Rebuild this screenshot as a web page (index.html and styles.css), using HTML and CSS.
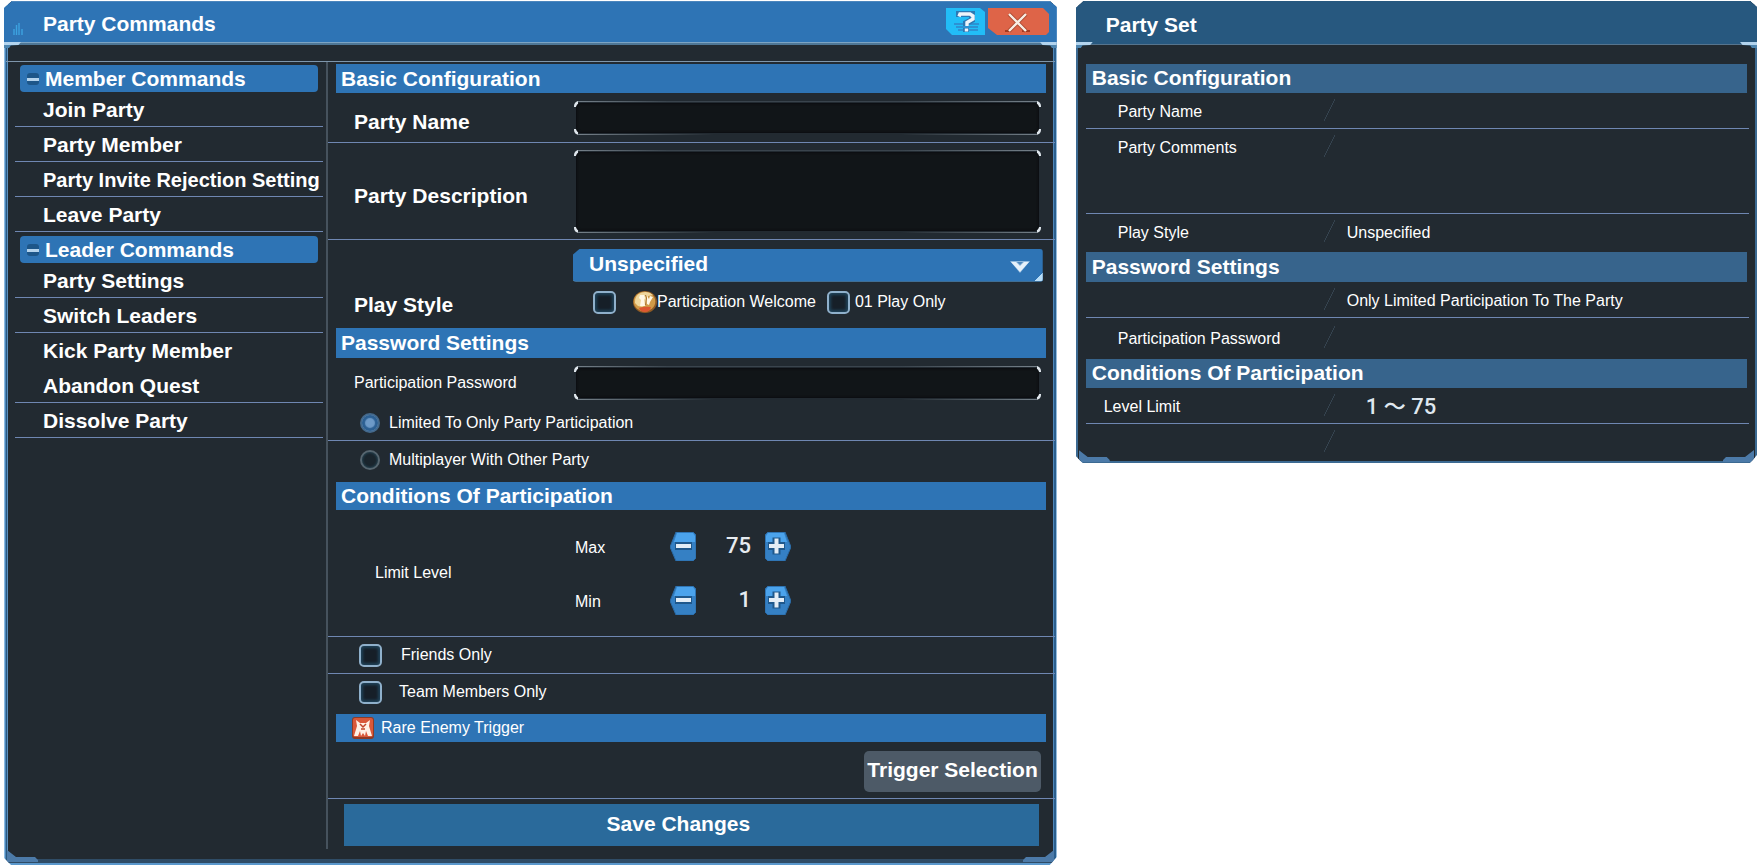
FILE: index.html
```html
<!DOCTYPE html>
<html lang="en">
<head>
<meta charset="utf-8">
<title>Party Commands</title>
<link rel="stylesheet" href="styles.css">
</head>
<body>
<main class="screen">
  <section class="window window-main">
    <header class="titlebar">
      <svg class="title-icon" viewBox="0 0 10 14" aria-hidden="true"><path d="M1 7v6M3.500 3v10M6 1v12M9 7v6" stroke="#3da3e0" stroke-width="1.400" fill="none"/></svg>
      <h1 class="title">Party Commands</h1>
      <button class="win-btn help" type="button" aria-label="Help">
        <svg viewBox="0 0 40 27" aria-hidden="true"><path d="M1 0h34l5 4v23H7l-6-6z" fill="#22bdf7"/><path d="M9 16h25M11 19h22M13 22h20" stroke="#2c92d4" stroke-width="2"/><path d="M14 9V6h13v6l-6 3v3M21 20v4" fill="none" stroke="#2b79b4" stroke-width="6"/><path d="M14 8.500L15 6h10l3 2v3l-6 3.500v3.500M21.500 20.500v3" fill="none" stroke="#eef4fa" stroke-width="3.400"/></svg>
      </button>
      <button class="win-btn close" type="button" aria-label="Close">
        <svg viewBox="0 0 62 27" aria-hidden="true"><path d="M1 0h55l6 6v18l-3 3H10l-9-7z" fill="#de6448"/><path d="M18 23h6M35 23h8" stroke="#a33a20" stroke-width="2"/><path d="M22 6l17 17M39 6L22 23" stroke="#a8472e" stroke-width="4"/><path d="M22 6l17 17M39 6L22 23" stroke="#f8ede4" stroke-width="2.400"/></svg>
      </button>
    </header>
    <i class="tick tick-l"></i><i class="tick tick-r"></i>
    <i class="foot foot-l"></i><i class="foot foot-r"></i>
    <div class="columns">
      <nav class="sidebar">
        <h2 class="group"><i class="collapse"></i>Member Commands</h2>
        <ul class="menu">
          <li><a href="#join">Join Party</a></li>
          <li><a href="#member">Party Member</a></li>
          <li><a class="long" href="#invite">Party Invite Rejection Setting</a></li>
          <li><a href="#leave">Leave Party</a></li>
        </ul>
        <h2 class="group"><i class="collapse"></i>Leader Commands</h2>
        <ul class="menu">
          <li><a href="#settings">Party Settings</a></li>
          <li><a href="#switch">Switch Leaders</a></li>
          <li class="plain"><a href="#kick">Kick Party Member</a></li>
          <li><a href="#abandon">Abandon Quest</a></li>
          <li><a href="#dissolve">Dissolve Party</a></li>
        </ul>
      </nav>
      <form class="settings">
        <h2 class="bar">Basic Configuration</h2>
        <div class="row row-name">
          <label class="big" for="pname">Party Name</label>
          <span class="field"><input id="pname" type="text"></span>
        </div>
        <div class="row row-desc">
          <label class="big" for="pdesc">Party Description</label>
          <span class="field"><textarea id="pdesc"></textarea></span>
        </div>
        <div class="row row-style">
          <label class="big" for="pstyle">Play Style</label>
          <div class="style-fields">
            <div class="select">
              <select id="pstyle"><option>Unspecified</option></select>
              <svg class="chevron" viewBox="0 0 20 12" aria-hidden="true"><path d="M0 0h20L10 12z" fill="#8fb9de"/><path d="M1 1h5l4 4 4-4h5L10 11z" fill="#e6f1fa"/><path d="M7 1h6l-3 3z" fill="#4f88bd"/></svg>
            </div>
            <div class="checks">
              <input class="box" id="welcome" type="checkbox">
              <label class="with-icon" for="welcome">
                <svg class="medal" viewBox="0 0 24 22" aria-hidden="true"><ellipse cx="12" cy="11" rx="12" ry="11" fill="#8f5a24"/><ellipse cx="11.500" cy="10.500" rx="10.800" ry="10" fill="#d09a48"/><path d="M2 12Q1 4 9 1.500 16 0 20 4l-5 1-2 9-4 2-4-1z" fill="#efd69c"/><path d="M7 4h4l1 3-1 2 1 6H7l1-6-2-2zM14 5l2 3 1-3 3 1-3 5-1 3-2-1z" fill="#fff8e6"/><path d="M12.500 4l1 3-1 7" stroke="#a8702c" fill="none"/><path d="M6 17q6-2 12-1-1 5-6 5t-6-4z" fill="#dc5730"/></svg>Participation Welcome</label>
              <input class="box" id="play01" type="checkbox">
              <label for="play01">01 Play Only</label>
            </div>
          </div>
        </div>
        <h2 class="bar bar-tall">Password Settings</h2>
        <div class="row row-pass">
          <label for="ppass">Participation Password</label>
          <span class="field"><input id="ppass" type="password"></span>
        </div>
        <div class="row row-radio ruled">
          <input class="dot" type="radio" name="mode" id="m1" checked><label for="m1">Limited To Only Party Participation</label>
        </div>
        <div class="row row-radio row-radio-last">
          <input class="dot" type="radio" name="mode" id="m2"><label for="m2">Multiplayer With Other Party</label>
        </div>
        <h2 class="bar bar-conditions">Conditions Of Participation</h2>
        <div class="row row-level">
          <span class="level-label">Limit Level</span>
          <div class="steppers">
            <div class="stepper">
              <span class="step-name">Max</span>
              <button type="button" aria-label="Lower maximum"><svg viewBox="0 0 26 29" aria-hidden="true"><path class="hex" d="M6 0h17l3 3v23l-3 3H6L0 15z"/><path class="shine" d="M7 1h16l2 3v6H4z"/><path d="M5 14h17" stroke="#1f588c" stroke-width="8"/><path d="M6 14h15" stroke="#e3edf6" stroke-width="4"/></svg></button>
              <output>75</output>
              <button type="button" aria-label="Raise maximum"><svg viewBox="0 0 26 29" aria-hidden="true"><path class="hex" d="M20 0H3L0 3v23l3 3h17l6-14z"/><path class="shine" d="M19 1H3L1 4v6h21z"/><path d="M3 14h17M11.500 5.500v17" stroke="#1f588c" stroke-width="8"/><path d="M4 14h15M11.500 6.500v15" stroke="#e3edf6" stroke-width="4"/></svg></button>
            </div>
            <div class="stepper">
              <span class="step-name">Min</span>
              <button type="button" aria-label="Lower minimum"><svg viewBox="0 0 26 29" aria-hidden="true"><path class="hex" d="M6 0h17l3 3v23l-3 3H6L0 15z"/><path class="shine" d="M7 1h16l2 3v6H4z"/><path d="M5 14h17" stroke="#1f588c" stroke-width="8"/><path d="M6 14h15" stroke="#e3edf6" stroke-width="4"/></svg></button>
              <output>1</output>
              <button type="button" aria-label="Raise minimum"><svg viewBox="0 0 26 29" aria-hidden="true"><path class="hex" d="M20 0H3L0 3v23l3 3h17l6-14z"/><path class="shine" d="M19 1H3L1 4v6h21z"/><path d="M3 14h17M11.500 5.500v17" stroke="#1f588c" stroke-width="8"/><path d="M4 14h15M11.500 6.500v15" stroke="#e3edf6" stroke-width="4"/></svg></button>
            </div>
          </div>
        </div>
        <div class="row row-check ruled">
          <input class="box" type="checkbox" id="friends"><label for="friends">Friends Only</label>
        </div>
        <div class="row row-check row-check-last">
          <input class="box" type="checkbox" id="team"><label for="team">Team Members Only</label>
        </div>
        <h2 class="bar bar-small">
          <svg class="rare" viewBox="0 0 22 22" aria-hidden="true"><rect width="22" height="22" rx="3" fill="#8f3a24"/><rect x="1" y="1" width="20" height="19" rx="2" fill="#d9583a"/><path d="M4 3l4 3h6l4-3-1 6 3 10h-4l-2-5-1 5-2-3-2 3-1-5-2 5H2L5 9z" fill="#fff1e6"/><path d="M8 7l3 3 3-3M9 12h4" stroke="#c2452a" stroke-width="1.500" fill="none"/></svg>Rare Enemy Trigger</h2>
        <div class="row row-trigger">
          <button class="trigger" type="button">Trigger Selection</button>
        </div>
        <button class="save" type="submit">Save Changes</button>
      </form>
    </div>
  </section>

  <section class="window window-info">
    <header class="titlebar">
      <h1 class="title">Party Set</h1>
    </header>
    <i class="tick tick-l"></i><i class="tick tick-r"></i>
    <i class="foot foot-l"></i><i class="foot foot-r"></i>
    <div class="info">
      <h2 class="bar">Basic Configuration</h2>
      <dl class="pair ruled"><dt>Party Name</dt><dd></dd></dl>
      <dl class="pair pair-tall ruled"><dt>Party Comments</dt><dd></dd></dl>
      <dl class="pair pair-style"><dt>Play Style</dt><dd>Unspecified</dd></dl>
      <h2 class="bar bar-tall">Password Settings</h2>
      <dl class="pair ruled"><dt></dt><dd>Only Limited Participation To The Party</dd></dl>
      <dl class="pair pair-last"><dt>Participation Password</dt><dd></dd></dl>
      <h2 class="bar">Conditions Of Participation</h2>
      <dl class="pair pair-level ruled"><dt>Level Limit</dt><dd class="range">1 ～ 75</dd></dl>
      <dl class="pair pair-end"><dt></dt><dd></dd></dl>
    </div>
  </section>
</main>
</body>
</html>
```
FILE: styles.css
```css
:root {
  --panel: #222a31;
  --blue: #2e74b5;
  --rule: #6f87b2;
  --bar: #2e74b5;
}
* { box-sizing: border-box; }
body {
  margin: 0;
  background: #fff;
  color: #fff;
  font: 16px/20px "Liberation Sans", Arial, sans-serif;
}
h1, h2, ul, dl, dd { margin: 0; padding: 0; }
h1, h2, .big { font-size: 21px; font-weight: bold; line-height: 24px; }
ul { list-style: none; }
a { color: inherit; text-decoration: none; }
button {
  border: 0;
  padding: 0;
  background: none;
  color: inherit;
  font: inherit;
}
svg { display: block; }
input, textarea, select { margin: 0; font: inherit; color: inherit; }

.screen {
  display: flex;
  align-items: flex-start;
  gap: 19px;
  padding: 1px 4px 0;
}

/* Window frame */
.window {
  position: relative;
  min-width: 0;
  padding: 0 4px 4px;
  background:
    linear-gradient(var(--panel), var(--panel)) 4px 0 / calc(100% - 8px) calc(100% - 4px) no-repeat,
    linear-gradient(#2f4c66, #2f4c66) 4px 100% / calc(100% - 8px) 4px no-repeat,
    linear-gradient(90deg, #8ab9e0 0 1px, #4b86ba 1px 2px, #2a587f 2px 3px, #5b8fbd 3px 50%, #4f86b8 50% calc(100% - 3px), #2b5f8e calc(100% - 3px) calc(100% - 1px), #6ba2d0 calc(100% - 1px));
  clip-path: polygon(8px 0, calc(100% - 7px) 0, 100% 6px, 100% calc(100% - 8px), calc(100% - 7px) 100%, 7px 100%, 0 calc(100% - 7px), 0 7px);
}
.window-main {
  flex: 1052 1 0;
  border-bottom: 2px solid #5b98cc;
  padding-bottom: 2px;
}
.window-info {
  --bar: #37648c;
  flex: 682 1 0;
  padding: 0 2px 2px;
  background:
    linear-gradient(var(--panel), var(--panel)) 2px 0 / calc(100% - 4px) calc(100% - 2px) no-repeat,
    #3c6a92;
}
.titlebar {
  display: flex;
  align-items: center;
  height: 44px;
  margin: 0 -4px;
  padding: 0 8px 0 9px;
  background: var(--blue);
  border-top: 1px solid #4c86bd;
  border-bottom: 2px solid #4f7796;
  box-shadow: inset 0 -1px #7da5c4;
}
.window-info .titlebar {
  margin: 0 -2px;
  padding: 3px 31px 0 30px;
  background: #27587f;
  border-top-color: #27587f;
  border-bottom: 1px solid #56748d;
  box-shadow: none;
}
.title-icon { width: 10px; height: 14px; margin: 12px 20px 0 0; }
.window-main .title { flex: 1; padding-top: 2px; }
.win-btn { margin-top: -2px; }
.win-btn svg { height: 27px; }
.help svg { width: 40px; }
.close svg { width: 62px; }
.close { margin-left: 2px; }

.tick, .foot { position: absolute; }
.tick {
  top: 41px;
  width: 17px;
  height: 6px;
  background: linear-gradient(#b3d4ee 3px, #4f86b0 3px);
  clip-path: polygon(0 0, 100% 0, 85% 50%, 40% 60%, 30% 100%, 0 100%);
}
.tick-l { left: 0; }
.tick-r { right: 0; transform: scaleX(-1); }
.foot {
  bottom: 1px;
  width: 36px;
  height: 12px;
  background: #4c7aa8;
  clip-path: polygon(0 0, 9px 7px, 28px 7px, 31px 10px, 31px 12px, 0 12px);
}
.foot-l { left: 3px; }
.foot-r { right: 3px; transform: scaleX(-1); }

.columns {
  display: flex;
  margin: 16px -2px 0;
  border-top: 1px solid #7e96ac;
}

/* Command list */
.sidebar {
  flex: 0 0 322px;
  min-width: 0;
  margin-bottom: 12px;
  padding: 3px 3px 0 9px;
  border-right: 2px solid #46525d;
}
.group {
  display: flex;
  align-items: center;
  gap: 6px;
  height: 27px;
  margin: 0 5px;
  padding-left: 7px;
  border-radius: 4px;
  background: var(--blue);
}
.menu + .group { margin-top: 4px; }
.collapse {
  width: 12px;
  height: 12px;
  border-radius: 3px;
  background: linear-gradient(#1d5689 5px, #b4d3ec 5px 8px, #1d5689 8px);
}
.menu li {
  height: 35px;
  padding: 6px 0 0 28px;
  border-bottom: 1px solid var(--rule);
  white-space: nowrap;
}
.menu .plain { border-bottom-color: transparent; }
.menu a { font-size: 21px; font-weight: bold; line-height: 24px; }
.menu .long { font-size: 20px; }

/* Settings form */
.settings { flex: 1; min-width: 0; }
.bar {
  display: flex;
  align-items: center;
  height: 29px;
  margin: 0 9px 0 8px;
  padding: 0 5px;
  background: var(--bar);
}
.settings > .bar:first-child { margin-top: 2px; }
.bar-tall { height: 30px; }
.settings .bar-conditions { height: 28px; }
.row {
  display: flex;
  align-items: center;
  padding: 0 14px 0 26px;
}
.row > label:first-child, .row > .big { flex: 0 0 220px; }
.row-name, .row-desc, .ruled, .row-level, .row-trigger { border-bottom: 1px solid var(--rule); }
.row-name { height: 50px; }
.row-desc { height: 97px; }
.row-name .big, .row-desc .big { padding-top: 9px; }
.row-style { height: 88px; }
.row-style .big { padding-top: 42px; }

/* Bracketed dark text boxes */
.field {
  flex: 1;
  display: flex;
  padding: 2px;
  border-radius: 5px;
  background:
    linear-gradient(#dfe6ec, #dfe6ec) 0 0 / 4px 6px no-repeat,
    linear-gradient(#dfe6ec, #dfe6ec) 100% 0 / 4px 6px no-repeat,
    linear-gradient(#dfe6ec, #dfe6ec) 0 100% / 4px 6px no-repeat,
    linear-gradient(#dfe6ec, #dfe6ec) 100% 100% / 4px 6px no-repeat,
    linear-gradient(90deg, #77828b, #3a444d 20% 70%, #77828b) 0 0 / 100% 1px no-repeat,
    linear-gradient(90deg, #77828b, #222a31 30% 70%, #77828b) 0 100% / 100% 1px no-repeat;
}
.field input, .field textarea {
  width: 100%;
  padding: 0 8px;
  border: 0;
  border-radius: 5px;
  background: #111518;
  box-shadow: inset 0 0 2px 1px #0c0d11;
  resize: none;
}
.field input { height: 30px; }
.field textarea { height: 79px; }

.style-fields { flex: 1; margin: 0 -2px 6px -1px; }
.select { position: relative; }
.select select {
  display: block;
  width: 100%;
  height: 33px;
  padding: 0 16px 2px;
  border: 0;
  border-bottom: 1px solid #5a9fd9;
  border-radius: 3px;
  background: linear-gradient(135deg, transparent 50%, #b9def8 50%) 100% 100% / 8px 8px no-repeat, var(--blue);
  clip-path: polygon(7px 0, 100% 0, 100% 100%, 0 100%, 0 6px);
  font-size: 21px;
  font-weight: bold;
  appearance: none;
}
.chevron {
  position: absolute;
  top: 12px;
  right: 12px;
  width: 22px;
  height: 12px;
  pointer-events: none;
}
.checks {
  display: flex;
  align-items: center;
  padding: 9px 0 0 20px;
  white-space: nowrap;
}
.with-icon { display: flex; align-items: center; margin: 0 11px 0 17px; }
.medal { width: 24px; height: 22px; }
.checks .box + label:last-child { margin-left: 5px; }

.box {
  appearance: none;
  flex: none;
  width: 23px;
  height: 23px;
  border: 2px solid #8fb0cb;
  border-radius: 5px;
  background: #161f28;
  box-shadow: inset 0 0 3px 2px #1f4259;
}
.dot {
  appearance: none;
  flex: none;
  width: 20px;
  height: 20px;
  border: 2px solid #566670;
  border-radius: 50%;
  background: #1a252d;
  box-shadow: inset 0 0 2px 1px #22404f;
}
.dot:checked {
  border-color: #44698c;
  background: #6e9ac8;
  box-shadow: inset 0 0 1px 3px #2c5f92;
}

.row-pass { height: 49px; }
.row-radio { height: 34px; padding: 0 14px 2px 32px; gap: 9px; }
.row-radio-last { height: 41px; padding-bottom: 4px; }
.row-level { height: 127px; padding-left: 47px; }
.level-label { width: 200px; }
.steppers { display: grid; gap: 25px; }
.stepper { display: flex; align-items: center; height: 29px; }
.step-name { width: 95px; padding-top: 3px; }
.stepper svg { width: 26px; height: 29px; }
.hex { fill: #3580c4; stroke: #2b6ba6; stroke-width: 1; }
.shine { fill: #4ba3ec; }
.stepper output {
  width: 69px;
  padding-right: 14px;
  color: #e6ebf0;
  font: 500 22px/26px Roboto, sans-serif;
  text-align: right;
}
.row-check { height: 37px; padding-left: 31px; gap: 19px; }
.row-check-last { height: 40px; padding-bottom: 4px; gap: 17px; }
.bar-small { height: 28px; padding-left: 16px; gap: 7px; font-size: 16px; font-weight: normal; }
.rare { width: 22px; height: 22px; }
.row-trigger { justify-content: flex-end; height: 57px; padding: 2px 14px 0; }
.trigger {
  height: 41px;
  padding: 0 3px 3px;
  border-radius: 5px;
  background: #4d5a67;
  font-size: 21px;
  font-weight: bold;
}
.save {
  display: block;
  width: calc(100% - 32px);
  height: 42px;
  margin: 5px 16px 15px;
  padding: 0 26px 3px 0;
  background: #2a6a9b;
  font-size: 21px;
  font-weight: bold;
}

/* Read-only party summary */
.info { padding: 19px 6px 0 8px; }
.info .bar { margin: 0 2px 0 0; padding: 0 6px 2px; }
.info .bar-tall { padding-bottom: 0; }
.pair {
  display: flex;
  height: 36px;
  padding: 9px 0 0 32px;
}
.pair dt { flex: 0 0 203px; }
.pair dd {
  position: relative;
  flex: 1;
  padding-left: 26px;
}
.pair dd::before {
  content: "";
  position: absolute;
  left: 3px;
  top: -3px;
  width: 11px;
  height: 22px;
  background: linear-gradient(to bottom right, transparent 47%, #35434f 48% 52%, transparent 53%);
}
.pair-tall { height: 85px; }
.pair-style { height: 38px; }
.pair-last { height: 41px; padding-top: 11px; }
.pair-level { padding-left: 18px; }
.pair-level dt { flex-basis: 217px; }
.pair .range {
  padding-left: 45px;
  color: #dfe7ef;
  font-family: Roboto, "Noto Sans CJK JP", sans-serif;
  font-size: 22px;
  font-weight: 500;
}
.pair-end { height: 37px; }
```
